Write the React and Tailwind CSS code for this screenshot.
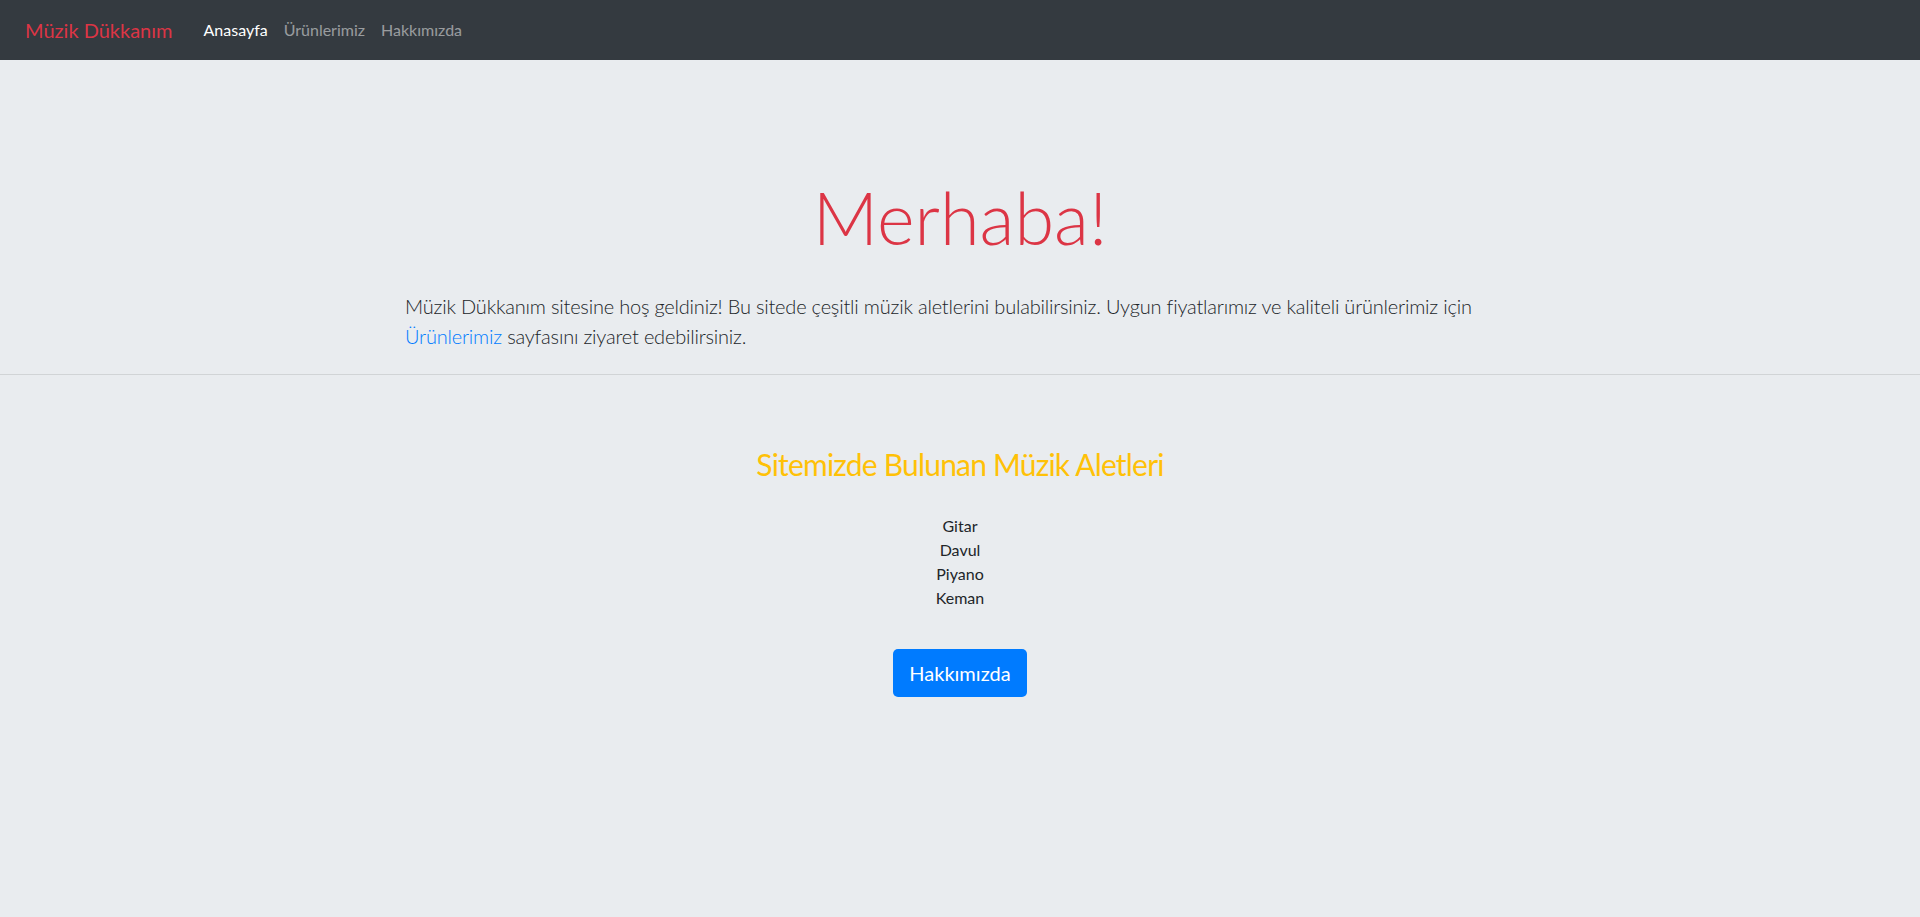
import React from "react";

const font = { fontFamily: 'Lato, "Open Sans", sans-serif' };

function Navbar() {
  return (
    <nav className="h-[60px] bg-[#343a40] flex items-center pl-[25px]">
      <a href="#" className="text-[20px] text-[#dc3545] mr-[23px] leading-[30px]">Müzik Dükkanım</a>
      <div className="flex items-center text-[16px] leading-[24px]">
        <a href="#" className="px-2 text-white">Anasayfa</a>
        <a href="#" className="px-2 text-[#ffffff80]">Ürünlerimiz</a>
        <a href="#" className="px-2 text-[#ffffff80]">Hakkımızda</a>
      </div>
    </nav>
  );
}

export default function App() {
  return (
    <div className="min-h-screen bg-[#e9ecef] text-[#212529]" style={font}>
      <Navbar />
      <div className="w-[1140px] mx-auto px-[15px] pt-[114px]">
        <h1 className="text-center text-[72px] leading-[86px] font-light text-[#dc3545]">Merhaba!</h1>
        <p className="mt-[31px] text-[20px] leading-[30px] font-light tracking-[-0.2px]">
          Müzik Dükkanım sitesine hoş geldiniz! Bu sitede çeşitli müzik aletlerini bulabilirsiniz. Uygun fiyatlarımız ve kaliteli ürünlerimiz için{" "}
          <a href="#" className="text-[#007bff]">Ürünlerimiz</a> sayfasını ziyaret edebilirsiniz.
        </p>
      </div>
      <hr className="mt-[23px] border-0 border-t border-[#0000001a]" />
      <div className="flex flex-col items-center pt-[71px]">
        <h2 className="text-[30px] leading-[36px] tracking-[-0.8px] text-[#ffc107]">Sitemizde Bulunan Müzik Aletleri</h2>
        <ul className="mt-[32px] text-[16px] leading-[24px] text-center">
          <li>Gitar</li>
          <li>Davul</li>
          <li>Piyano</li>
          <li>Keman</li>
        </ul>
        <button className="mt-[39px] h-[48px] px-4 rounded-[5px] bg-[#007bff] text-white text-[20px] leading-[30px]">Hakkımızda</button>
      </div>
    </div>
  );
}
